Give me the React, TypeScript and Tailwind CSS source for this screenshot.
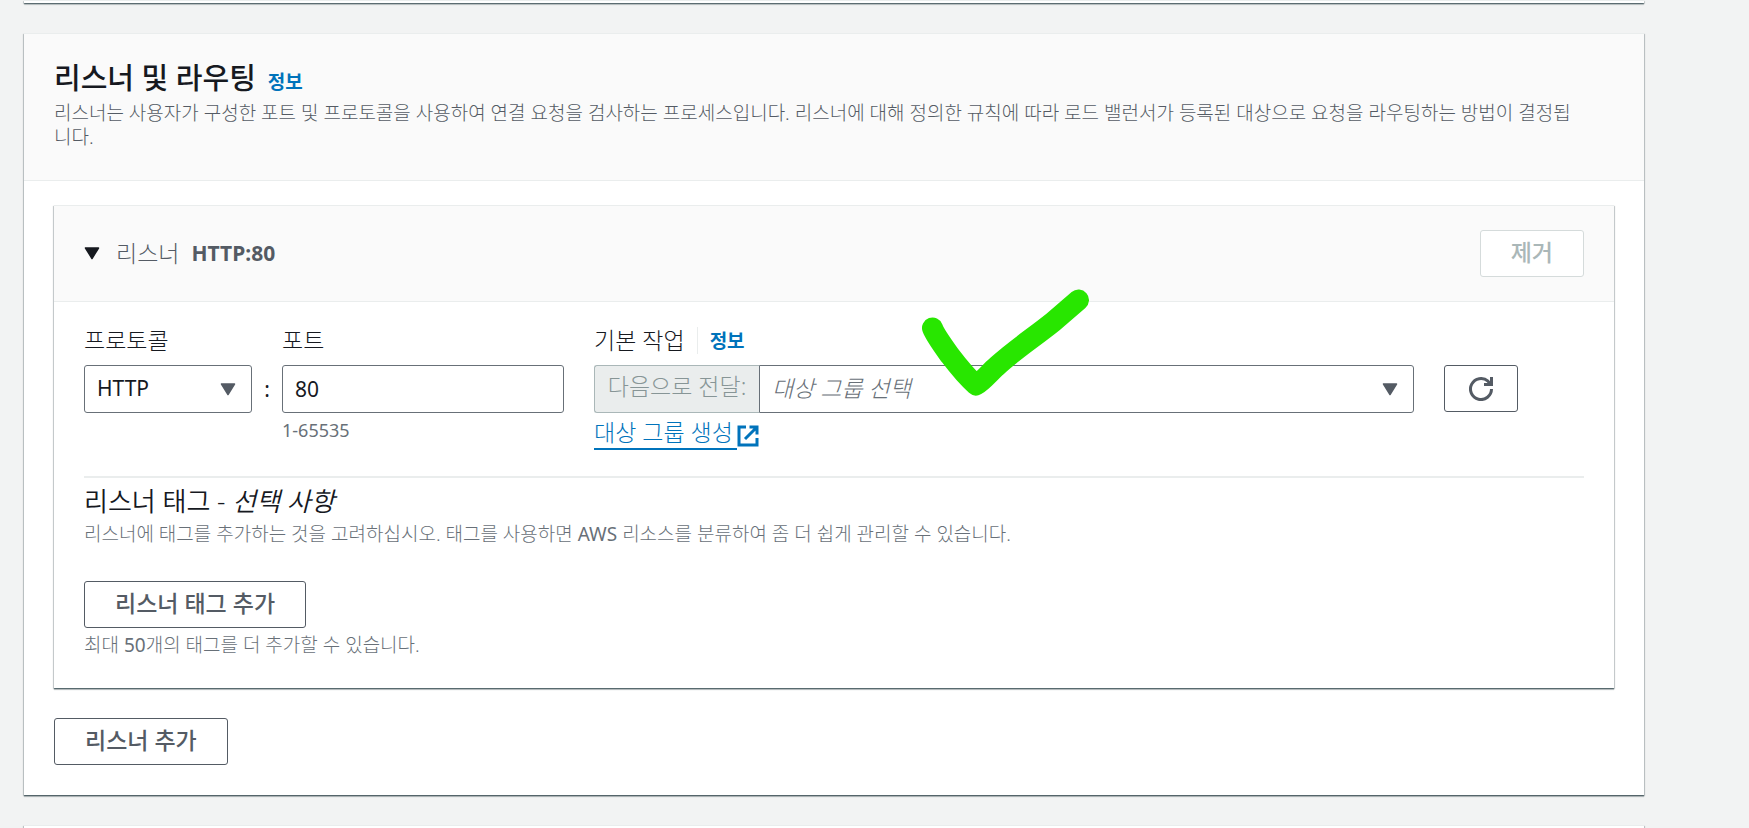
import type { ReactNode } from 'react';

const PANEL =
  'border-t border-[#eaeded] bg-white shadow-[0_1px_1px_0_rgba(0,28,36,0.4),0_2px_1px_0_rgba(0,28,36,0.2),1px_1px_1px_0_rgba(0,28,36,0.15),-1px_1px_1px_0_rgba(0,28,36,0.15)]';

const BUTTON =
  'flex h-[47px] items-center justify-center rounded-[3px] border bg-white px-[30px] pb-[3px] text-[23px] leading-[33px] font-medium';

const FIELD =
  'h-12 w-full appearance-none rounded-[3px] border border-[#687078] bg-white px-3 text-[21px] text-[#16191f]';

const LABEL = 'text-[23px] leading-[33px] font-light';

function Caret({ className }: { className: string }) {
  return (
    <svg viewBox="0 0 16 13" className={className} aria-hidden="true">
      <path d="M1.5 1h13L8 11.500z" fill="currentColor" stroke="currentColor" strokeWidth="1.500" strokeLinejoin="round" />
    </svg>
  );
}

function InfoLink() {
  return (
    <a href="#info" className="text-[19px] leading-6 font-bold text-[#0073bb]">
      정보
    </a>
  );
}

function Hint({ children, className = '' }: { children: ReactNode; className?: string }) {
  return <p className={`text-[19px] leading-6 font-light text-[#687078] ${className}`}>{children}</p>;
}

function CheckMark() {
  return (
    <svg
      viewBox="0 0 170 110"
      className="pointer-events-none absolute -top-[35px] left-[327px] h-[110px] w-[170px]"
      aria-hidden="true"
    >
      <path
        d="M11.500 39C14 46 20 54 29 66.500C37 77 46 88 55 96C62 92 68 84 76 77C92 62 112 49 132 33L157.500 11"
        fill="none"
        stroke="#28e600"
        strokeWidth="21"
        strokeLinecap="round"
        strokeLinejoin="round"
      />
    </svg>
  );
}

function ListenerCard() {
  return (
    <section className={PANEL}>
      <header className="flex items-center justify-between border-b border-[#eaeded] bg-[#fafafa] px-[30px] py-6">
        <h3 className="flex items-center text-[#545b64]">
          <button type="button" aria-label="리스너 접기" className="mr-4 text-[#16191f]">
            <Caret className="h-[13px] w-4" />
          </button>
          <span className={`mr-3 ${LABEL}`}>리스너</span>
          <span className="text-[21px] leading-[33px] font-bold">HTTP:80</span>
        </h3>
        <button type="button" disabled className={`${BUTTON} border-[#d5dbdb] text-[#aab7b8]`}>
          제거
        </button>
      </header>

      <div className="px-[30px] pt-[22px] pb-[31px]">
        <div className="grid grid-cols-[480fr_820fr_74px] gap-x-[30px] border-b-2 border-[#eaeded] pr-[66px] pb-[26px]">
          <div className="grid grid-cols-[168fr_30px_282fr] content-start">
            <label htmlFor="protocol" className={`mb-2 ${LABEL}`}>
              프로토콜
            </label>
            <span />
            <label htmlFor="port" className={`mb-2 ${LABEL}`}>
              포트
            </label>
            <div className="relative">
              <select id="protocol" defaultValue="HTTP" className={FIELD}>
                <option>HTTP</option>
                <option>HTTPS</option>
              </select>
              <Caret className="pointer-events-none absolute top-[18px] right-4 h-[13px] w-4 text-[#545b64]" />
            </div>
            <span className="text-center text-[21px] leading-[48px]">:</span>
            <input id="port" type="text" defaultValue="80" className={FIELD} />
            <p className="col-start-3 mt-1 text-[18px] leading-[27px] text-[#687078]">1-65535</p>
          </div>

          <div className="relative">
            <div className="mb-2 flex h-[33px] items-center">
              <label htmlFor="target" className={`mr-3 ${LABEL}`}>
                기본 작업
              </label>
              <span className="mr-3 h-[27px] w-px bg-[#eaeded]" />
              <InfoLink />
            </div>
            <div className="flex">
              <span className="flex h-12 w-[165px] shrink-0 items-center justify-center rounded-l-[3px] border border-r-0 border-[#aab7b8] bg-[#eaeded] pb-[6px] text-[23px] font-light whitespace-nowrap text-[#879596]">
                다음으로 전달:
              </span>
              <div className="relative flex-1">
                <select
                  id="target"
                  defaultValue=""
                  className="h-12 w-full appearance-none rounded-r-[3px] border border-[#687078] bg-white px-3 pb-[2px] text-[23px] font-light text-[#687078] italic"
                >
                  <option value="">대상 그룹 선택</option>
                </select>
                <Caret className="pointer-events-none absolute top-[18px] right-4 h-[13px] w-4 text-[#545b64]" />
              </div>
            </div>
            <a href="#create-target-group" className="mt-1 inline-flex items-center text-[23px] leading-[31px] font-light text-[#0073bb]">
              <span className="border-b-2 border-[#0073bb] pr-1">대상 그룹 생성</span>
              <svg viewBox="0 0 22 22" className="mt-1 h-[22px] w-[22px]" fill="none" stroke="currentColor" strokeWidth="3" aria-hidden="true">
                <path d="M9 2H2v18h18v-7M12.500 2H20v7.500M20 2L8 14" />
              </svg>
            </a>
            <CheckMark />
          </div>

          <button
            type="button"
            aria-label="새로 고침"
            className="mt-[41px] flex h-[47px] items-center justify-center rounded-[3px] border border-[#545b64] bg-white text-[#545b64]"
          >
            <svg viewBox="0 0 24 24" className="h-6 w-6" fill="none" stroke="currentColor" strokeWidth="3" aria-hidden="true">
              <path d="M22.500 12A10.500 10.500 0 1 1 19 4.200L21.500 7" />
              <path d="M22.500 0v7.500H15" />
            </svg>
          </button>
        </div>

        <h4 className="mt-[7px] text-[26px] leading-[33px] font-[350]">
          리스너 태그 - <em>선택 사항</em>
        </h4>
        <Hint className="mt-1">
          리스너에 태그를 추가하는 것을 고려하십시오. 태그를 사용하면 <span className="font-normal">AWS</span> 리소스를 분류하여 좀 더 쉽게
          관리할 수 있습니다.
        </Hint>
        <button type="button" className={`${BUTTON} mt-[35px] border-[#545b64] text-[#545b64]`}>
          리스너 태그 추가
        </button>
        <Hint className="mt-[5px]">
          최대 <span className="font-normal">50</span>개의 태그를 더 추가할 수 있습니다.
        </Hint>
      </div>
    </section>
  );
}

export default function App() {
  return (
    <div className="h-screen overflow-hidden bg-[#f2f3f3] pr-[105px] pl-6 font-['Noto_Sans','Noto_Sans_CJK_KR',sans-serif] text-[#16191f]">
      <div className={`${PANEL} h-[3px]`} />

      <main className={`${PANEL} mt-[30px]`}>
        <header className="border-b border-[#eaeded] bg-[#fafafa] pt-[25px] pr-16 pb-[31px] pl-[30px]">
          <div className="flex items-baseline gap-3">
            <h2 className="text-[29px] leading-[38px] font-medium">리스너 및 라우팅</h2>
            <InfoLink />
          </div>
          <p className="mt-1 text-[19px] leading-6 font-light break-all text-[#545b64]">
            리스너는 사용자가 구성한 포트 및 프로토콜을 사용하여 연결 요청을 검사하는 프로세스입니다. 리스너에 대해 정의한 규칙에 따라 로드 밸런서가 등록된 대상으로 요청을 라우팅하는 방법이 결정됩니다.
          </p>
        </header>
        <div className="px-[30px] pt-6 pb-[30px]">
          <ListenerCard />
          <button type="button" className={`${BUTTON} mt-[30px] border-[#545b64] text-[#545b64]`}>
            리스너 추가
          </button>
        </div>
      </main>

      <div className={`${PANEL} mt-[30px] h-10`} />
    </div>
  );
}
